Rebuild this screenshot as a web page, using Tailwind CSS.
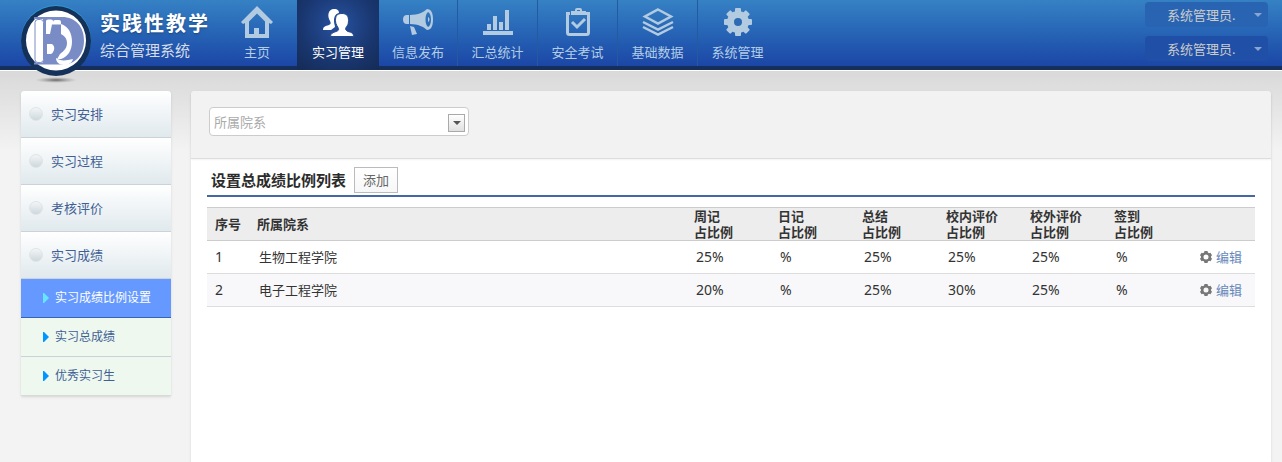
<!DOCTYPE html>
<html lang="zh-CN">
<head>
    <meta charset="UTF-8">
    <meta name="viewport" content="width=device-width, initial-scale=1.0">
    <title>实践性教学综合管理系统</title>
    <script src="https://cdn.jsdelivr.net/npm/@tailwindcss/browser@4"></script>
</head>
<body class="min-h-screen flex flex-col bg-[#f3f3f3] font-['Noto_Sans','Noto_Sans_CJK_SC',sans-serif] text-[13px] leading-4 text-[#333]">

    <!-- Header -->
    <header class="flex h-[70px] shrink-0 border-b-4 border-[#152e5a] bg-linear-to-b from-[#3681c4] to-[#1c46a6]">
        <a href="#" class="flex w-[217px] shrink-0 pl-5 pt-1">
            <svg class="w-[72px] h-[80px] shrink-0 relative z-10" viewBox="0 0 72 80">
                <defs>
                    <radialGradient id="logoShadow">
                        <stop offset="0" stop-color="#444" stop-opacity=".8"/>
                        <stop offset="1" stop-color="#888" stop-opacity="0"/>
                    </radialGradient>
                </defs>
                <ellipse cx="36" cy="76" rx="21" ry="3" fill="url(#logoShadow)"/>
                <circle cx="36" cy="36" r="35" fill="#2b9bd6"/>
                <circle cx="36" cy="37" r="35" fill="#14315a"/>
                <circle cx="36" cy="36.500" r="30" fill="#fff"/>
                <path fill="#7a8cc6" d="M14 13h28c14 0 22 10 22 23.500S56 60 44 60.500H14v-2h9V15h-9z"/>
                <rect x="15" y="15.500" width="8.500" height="43" rx="3" fill="#fff" stroke="#7a8cc6"/>
                <path fill="#fff" d="M26 17q0-1.500 2-1.500h3q2 0 2 1.500v10l-1.500 3H26z"/>
                <path fill="#fff" d="M33 18q0-2 2-2h4q2 0 2 2v3h-8z"/>
                <path fill="#fff" d="M41 20c7 2 11 9 11 17.500S48 53 41 55h-5l2-5V21z"/>
                <path fill="#7a8cc6" d="M32 20.500h9V30c4 2 6 5 6 9 0 5-3 8-7 11l-4 7H24V30h6z"/>
                <path fill="#fff" d="M27 40h5q3 2 2 6-1 3-3 4h-4z"/>
                <path fill="#fff" d="M36 54c4 3 9 3 17 1-1 4-5 6-9 6-5 0-8-3-8-7z"/>
            </svg>
            <span class="flex flex-col gap-1.5 pl-2 pt-2 whitespace-nowrap">
                <span class="text-xl leading-6 font-bold tracking-widest text-white text-shadow-md">实践性教学</span>
                <span class="text-[15px] leading-4 text-[#d5dde8]">综合管理系统</span>
            </span>
        </a>

        <nav class="flex text-[#b3cde6]">
            <a href="#" class="flex w-20 flex-col items-center gap-1 pt-1">
                <svg class="w-9 h-9" viewBox="0 0 36 36"><path fill="#b3cbe0" fill-rule="evenodd" d="M18 2l16 16-2 2-2-1v15H6V19l-2 1-2-2zm0 7.500l-8 8V30h5v-6h5v6h6V17.500z"/></svg>
                <span>主页</span>
            </a>
            <a href="#" class="flex w-[82px] flex-col items-center gap-1 pt-1 -mb-1 text-white bg-[radial-gradient(circle_at_50%_35%,#2752a0,#19366f_60%,#142b54)]">
                <svg class="w-9 h-9" viewBox="0 0 36 36" fill="#fff">
                    <path d="M14 5c4 0 5 2 5 4-4 1-5 4-5 8 0 3 1 4 1 6l-4 3H3c0-3 2-4 6-5 2-1 2-2 1-4-3-5-2-12 4-12z"/>
                    <path stroke="#24498f" stroke-width="1" d="M22 9.500c5 0 6.500 3 6.500 7s-1 5-2.500 7c-1 2 0 3 2 4 4 1 5.500 2 5.500 5h-23c0-3 2.500-4 5.500-5s3-2 2-4c-2-3-2.500-5-2.500-7 0-4 1-7 6.500-7z"/>
                </svg>
                <span>实习管理</span>
            </a>
            <a href="#" class="flex w-[78px] flex-col items-center gap-1 pt-1">
                <svg class="w-9 h-9" viewBox="0 0 36 36" fill="#b3cbe0">
                    <path d="M9 11v9H7c-3 0-4-2-4-4.500S4 11 7 11z"/>
                    <path fill-rule="evenodd" d="M10 11c8 0 14-3 17-6 4 0 6 4 6 10.500S31 26 27 26c-3-3-9-6-17-6zm18-3c-2 2-2.500 4-2.500 7.500S26 21 28 23c2-1 3-4 3-7.500S30 9 28 8zm0 5c2 1 2 4 0 5z"/>
                    <path d="M10 22l4 1 3 7-5 1z"/>
                </svg>
                <span>信息发布</span>
            </a>
            <a href="#" class="flex w-20 flex-col items-center gap-1 pt-1 border-l border-[#245a9f]">
                <svg class="w-9 h-9" viewBox="0 0 36 36" fill="#b3cbe0"><path d="M3 27h30v4H3zM7 20h4v6H7zM13 12h4v14h-4zM19 18h4v8h-4zM25 6h4v20h-4z"/></svg>
                <span>汇总统计</span>
            </a>
            <a href="#" class="flex w-20 flex-col items-center gap-1 pt-1 border-l border-[#245a9f]">
                <svg class="w-9 h-9" viewBox="0 0 36 36" fill="none" stroke="#b3cbe0">
                    <path stroke-width="3" d="M10 9.500H7.500v19a2 2 0 0 0 2 2h17a2 2 0 0 0 2-2v-19H26"/>
                    <path fill="#b3cbe0" stroke="none" fill-rule="evenodd" d="M11 7h4V6q0-2 2-2h3q2 0 2 2v1h4v4H11zm6-1v1h3V6z"/>
                    <path stroke-width="3" d="M12 18l5 5 8-8"/>
                </svg>
                <span>安全考试</span>
            </a>
            <a href="#" class="flex w-20 flex-col items-center gap-1 pt-1 border-l border-[#245a9f]">
                <svg class="w-9 h-9" viewBox="0 0 36 36" fill="none" stroke="#b3cbe0" stroke-width="2.500">
                    <path d="M18 5.500L31 12.500 18 19.500 5 12.500z"/>
                    <path d="M3 18l15 7.500L33 18M3 23l15 7.500L33 23"/>
                </svg>
                <span>基础数据</span>
            </a>
            <a href="#" class="flex w-20 flex-col items-center gap-1 pt-1 border-l border-[#245a9f]">
                <svg class="w-9 h-9" viewBox="0 0 36 36">
                    <g fill="#b3cbe0">
                        <rect x="15" y="4" width="6" height="28" rx="1"/>
                        <rect x="15" y="4" width="6" height="28" rx="1" transform="rotate(45 18 18)"/>
                        <rect x="15" y="4" width="6" height="28" rx="1" transform="rotate(90 18 18)"/>
                        <rect x="15" y="4" width="6" height="28" rx="1" transform="rotate(135 18 18)"/>
                        <circle cx="18" cy="18" r="11"/>
                    </g>
                    <circle cx="18" cy="18" r="4" fill="#2d6ab6"/>
                </svg>
                <span>系统管理</span>
            </a>
        </nav>

        <div class="ml-auto mr-3.5 flex flex-col gap-[9px] pt-0.5 text-[#ccc]">
            <button type="button" class="flex h-[25px] w-[123px] items-center justify-between rounded bg-[#2864b2] pl-[22px] pr-1.5">
                系统管理员.
                <svg class="w-2 h-1" viewBox="0 0 8 4"><path fill="#8aa5cf" d="M0 0h8L4 4z"/></svg>
            </button>
            <button type="button" class="flex h-[25px] w-[123px] items-center justify-between rounded bg-[#1f4fa6] pl-[22px] pr-1.5">
                系统管理员.
                <svg class="w-2 h-1" viewBox="0 0 8 4"><path fill="#8aa5cf" d="M0 0h8L4 4z"/></svg>
            </button>
        </div>
    </header>

    <div class="flex flex-1 items-stretch gap-5 border-t border-white bg-linear-to-b from-[#d9d9d9] to-[#f3f3f3] to-[80px] pl-[21px] pr-[11px] pt-5">

        <!-- Sidebar -->
        <aside class="w-[150px] shrink-0 self-start overflow-hidden rounded-t bg-white text-[#3f5f95] shadow">
            <a href="#" class="flex h-[47px] items-center gap-2 border-b border-[#ccd2d6] bg-linear-to-b from-white to-[#e0e9ed] pl-2">
                <span class="size-3.5 rounded-full border border-[#dfe4e7] bg-linear-to-b from-[#f3f5f6] to-[#cdd8dd]"></span>
                实习安排
            </a>
            <a href="#" class="flex h-[47px] items-center gap-2 border-b border-[#ccd2d6] bg-linear-to-b from-white to-[#e0e9ed] pl-2">
                <span class="size-3.5 rounded-full border border-[#dfe4e7] bg-linear-to-b from-[#f3f5f6] to-[#cdd8dd]"></span>
                实习过程
            </a>
            <a href="#" class="flex h-[47px] items-center gap-2 border-b border-[#ccd2d6] bg-linear-to-b from-white to-[#e0e9ed] pl-2">
                <span class="size-3.5 rounded-full border border-[#dfe4e7] bg-linear-to-b from-[#f3f5f6] to-[#cdd8dd]"></span>
                考核评价
            </a>
            <a href="#" class="flex h-[47px] items-center gap-2 border-b border-[#ccd2d6] bg-linear-to-b from-white to-[#e0e9ed] pl-2">
                <span class="size-3.5 rounded-full border border-[#dfe4e7] bg-linear-to-b from-[#f3f5f6] to-[#cdd8dd]"></span>
                实习成绩
            </a>
            <div class="text-xs leading-4">
                <a href="#" class="flex h-[39px] items-center gap-1.5 border-b border-[#3465b5] bg-[#6699ff] pl-[22px] text-white">
                    <svg class="w-1.5 h-2.5" viewBox="0 0 6 10"><path fill="#66e5ff" d="M0 0h1l5 5-5 5H0z"/></svg>
                    实习成绩比例设置
                </a>
                <a href="#" class="flex h-[39px] items-center gap-1.5 border-b border-[#c9d3da] bg-[#eef8ef] pl-[22px]">
                    <svg class="w-1.5 h-2.5" viewBox="0 0 6 10"><path fill="#0095ff" d="M0 0h1l5 5-5 5H0z"/></svg>
                    实习总成绩
                </a>
                <a href="#" class="flex h-[39px] items-center gap-1.5 border-b border-[#d5ddd9] bg-[#eef8ef] pl-[22px]">
                    <svg class="w-1.5 h-2.5" viewBox="0 0 6 10"><path fill="#0095ff" d="M0 0h1l5 5-5 5H0z"/></svg>
                    优秀实习生
                </a>
            </div>
        </aside>

        <!-- Content -->
        <main class="flex-1 rounded-t bg-white shadow">
            <form class="rounded-t border-b border-[#ddd] bg-[#f2f2f2] px-[18px] pt-4 pb-[22px] shadow-xs">
                <div class="relative w-[260px]">
                    <select aria-label="所属院系" class="block h-[29px] w-full appearance-none rounded border border-[#ccc] bg-white px-1 text-[#aaa]">
                        <option>所属院系</option>
                        <option>生物工程学院</option>
                        <option>电子工程学院</option>
                    </select>
                    <span class="pointer-events-none absolute right-1 top-[7px] flex h-[18px] w-[17px] items-center justify-center border border-[#aaa] bg-linear-to-b from-white to-[#e0e0e0]">
                        <svg class="w-2 h-1" viewBox="0 0 8 4"><path fill="#555" d="M0 0h8L4 4z"/></svg>
                    </span>
                </div>
            </form>

            <section class="px-4 pt-2">
                <div class="flex items-center gap-2 border-b-2 border-[#4369a5] pb-0.5 pl-1">
                    <h1 class="text-[15px] leading-5 font-bold text-[#2b2b2b]">设置总成绩比例列表</h1>
                    <button type="button" class="h-[26px] w-11 border border-[#bbb] bg-linear-to-b from-white to-[#f7f7f7] text-[#666]">添加</button>
                </div>

                <table class="mt-2.5 w-full table-fixed border-collapse text-left">
                    <thead>
                        <tr class="h-[33px] border-y border-[#ccc] bg-[#ededed]">
                            <th class="w-[42px] p-0 pl-2">序号</th>
                            <th class="p-0 pl-2">所属院系</th>
                            <th class="w-[84px] p-0 pl-2">周记<br>占比例</th>
                            <th class="w-[84px] p-0 pl-2">日记<br>占比例</th>
                            <th class="w-[84px] p-0 pl-2">总结<br>占比例</th>
                            <th class="w-[84px] p-0 pl-2">校内评价<br>占比例</th>
                            <th class="w-[84px] p-0 pl-2">校外评价<br>占比例</th>
                            <th class="w-[84px] p-0 pl-2">签到<br>占比例</th>
                            <th class="w-[65px] p-0"></th>
                        </tr>
                    </thead>
                    <tbody>
                        <tr class="h-[33px] border-b border-[#ddd]">
                            <td class="pl-2 text-sm leading-4">1</td>
                            <td class="pl-2.5">生物工程学院</td>
                            <td class="pl-2.5 text-sm leading-4">25%</td>
                            <td class="pl-2.5 text-sm leading-4">%</td>
                            <td class="pl-2.5 text-sm leading-4">25%</td>
                            <td class="pl-2.5 text-sm leading-4">25%</td>
                            <td class="pl-2.5 text-sm leading-4">25%</td>
                            <td class="pl-2.5 text-sm leading-4">%</td>
                            <td class="pl-2.5">
                                <a href="#" class="flex items-center gap-1 text-[#6688bb]">
                                    <svg class="size-3 shrink-0" viewBox="0 0 12 12"><path fill="#777" fill-rule="evenodd" d="M4.500 0h3l.4 1.600 1.100.6L10.500 1.800 12 4.300 11 5.400v1.200l1 1.100-1.500 2.500L9 9.800l-1.100.6L7.500 12h-3l-.4-1.600L3 9.800l-1.500.4L0 7.700l1-1.100V5.400L0 4.300l1.500-2.500L3 2.200l1.100-.6zM6 3.500a2.500 2.500 0 1 0 0 5 2.500 2.500 0 0 0 0-5z"/></svg>
                                    编辑
                                </a>
                            </td>
                        </tr>
                        <tr class="h-[33px] border-b border-[#ddd] bg-[#f8f8fa]">
                            <td class="pl-2 text-sm leading-4">2</td>
                            <td class="pl-2.5">电子工程学院</td>
                            <td class="pl-2.5 text-sm leading-4">20%</td>
                            <td class="pl-2.5 text-sm leading-4">%</td>
                            <td class="pl-2.5 text-sm leading-4">25%</td>
                            <td class="pl-2.5 text-sm leading-4">30%</td>
                            <td class="pl-2.5 text-sm leading-4">25%</td>
                            <td class="pl-2.5 text-sm leading-4">%</td>
                            <td class="pl-2.5">
                                <a href="#" class="flex items-center gap-1 text-[#6688bb]">
                                    <svg class="size-3 shrink-0" viewBox="0 0 12 12"><path fill="#777" fill-rule="evenodd" d="M4.500 0h3l.4 1.600 1.100.6L10.500 1.800 12 4.300 11 5.400v1.200l1 1.100-1.500 2.500L9 9.800l-1.100.6L7.500 12h-3l-.4-1.600L3 9.800l-1.500.4L0 7.700l1-1.100V5.400L0 4.300l1.500-2.500L3 2.200l1.100-.6zM6 3.500a2.500 2.500 0 1 0 0 5 2.500 2.500 0 0 0 0-5z"/></svg>
                                    编辑
                                </a>
                            </td>
                        </tr>
                    </tbody>
                </table>
            </section>
        </main>
    </div>

</body>
</html>
